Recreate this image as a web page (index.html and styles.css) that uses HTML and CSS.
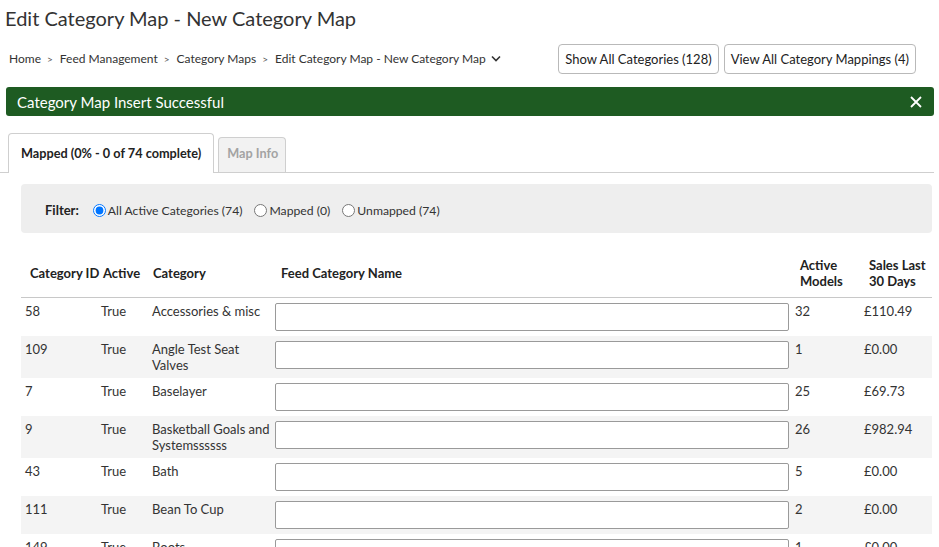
FILE: index.html
```html
<!DOCTYPE html>
<html lang="en">
<head>
<meta charset="utf-8">
<title>Edit Category Map - New Category Map</title>
<link rel="stylesheet" href="styles.css">
</head>
<body>
<h1 class="page-title">Edit Category Map - New Category Map</h1>

<div class="toolbar">
  <nav class="breadcrumb">
    <span>Home</span><span class="sep">&gt;</span>
    <span>Feed Management</span><span class="sep">&gt;</span>
    <span>Category Maps</span><span class="sep">&gt;</span>
    <span>Edit Category Map - New Category Map</span>
    <svg class="chev" width="10" height="7" viewBox="0 0 10 7"><path d="M1 1.5 L5 5.5 L9 1.5" fill="none" stroke="#333" stroke-width="1.6"/></svg>
  </nav>
  <div class="actions">
    <button class="btn">Show All Categories (128)</button>
    <button class="btn">View All Category Mappings (4)</button>
  </div>
</div>

<div class="alert">
  <span>Category Map Insert Successful</span>
  <svg class="close" width="12" height="12" viewBox="0 0 12 12"><path d="M1 1 L11 11 M11 1 L1 11" stroke="#fff" stroke-width="1.8" fill="none"/></svg>
</div>

<div class="tabs">
  <div class="tab active">Mapped (0% - 0 of 74 complete)</div>
  <div class="tab">Map Info</div>
</div>

<div class="tab-body">
  <div class="filter">
    <span class="filter-label">Filter:</span>
    <label class="opt"><input type="radio" name="f" checked> All Active Categories (74)</label>
    <label class="opt"><input type="radio" name="f"> Mapped (0)</label>
    <label class="opt"><input type="radio" name="f"> Unmapped (74)</label>
  </div>

  <table class="grid">
    <colgroup>
      <col class="c1"><col class="c2"><col class="c3"><col class="c4"><col class="c5"><col class="c6">
    </colgroup>
    <thead>
      <tr>
        <th class="h1">Category ID</th>
        <th class="h2">Active</th>
        <th class="h3">Category</th>
        <th class="h4">Feed Category Name</th>
        <th class="h5">Active<br>Models</th>
        <th class="h6">Sales Last<br>30 Days</th>
      </tr>
    </thead>
    <tbody>
      <tr><td>58</td><td class="d2">True</td><td class="d3">Accessories &amp; misc</td><td><input class="feed" type="text"></td><td>32</td><td>£110.49</td></tr>
      <tr><td>109</td><td class="d2">True</td><td class="d3">Angle Test Seat Valves</td><td><input class="feed" type="text"></td><td>1</td><td>£0.00</td></tr>
      <tr><td>7</td><td class="d2">True</td><td class="d3">Baselayer</td><td><input class="feed" type="text"></td><td>25</td><td>£69.73</td></tr>
      <tr><td>9</td><td class="d2">True</td><td class="d3">Basketball Goals and Systemssssss</td><td><input class="feed" type="text"></td><td>26</td><td>£982.94</td></tr>
      <tr><td>43</td><td class="d2">True</td><td class="d3">Bath</td><td><input class="feed" type="text"></td><td>5</td><td>£0.00</td></tr>
      <tr><td>111</td><td class="d2">True</td><td class="d3">Bean To Cup</td><td><input class="feed" type="text"></td><td>2</td><td>£0.00</td></tr>
      <tr><td>149</td><td class="d2">True</td><td class="d3">Boots</td><td><input class="feed" type="text"></td><td>1</td><td>£0.00</td></tr>
    </tbody>
  </table>
</div>
</body>
</html>
```

FILE: styles.css
```css
* { box-sizing: border-box; }

html, body { margin: 0; }

body {
  padding: 0 5px 0 6px;
  font-family: Lato, "Open Sans", Arial, sans-serif;
  font-size: 13px;
  color: #333;
  background: #fff;
  overflow: hidden;
}

.page-title {
  margin: 0;
  padding-top: 6px;
  font-size: 20px;
  line-height: 24px;
  font-weight: 400;
  color: #333;
  margin-left: -1px;
}

.toolbar {
  display: flex;
  align-items: center;
  justify-content: space-between;
  margin-top: 14px;
  padding-right: 18px;
}

.breadcrumb {
  display: flex;
  align-items: center;
  padding-left: 3px;
  font-size: 12px;
  line-height: 14px;
  color: #333;
  margin-top: -1px;
}

.breadcrumb .sep {
  font-size: 10px;
  margin: 0 7px 0 6px;
  color: #555;
}

.breadcrumb .chev { margin-left: 5px; }

.actions { display: flex; gap: 5px; }

.btn {
  font-family: inherit;
  font-size: 13px;
  color: #222;
  background: #fff;
  border: 1px solid #b9b9b9;
  border-radius: 4px;
  height: 30px;
  padding: 0 6px;
  line-height: 28px;
}

.alert {
  display: flex;
  align-items: center;
  justify-content: space-between;
  margin-top: 13px;
  height: 29px;
  padding: 0 12px 0 11px;
  background: #1e5b22;
  color: #fff;
  font-size: 15px;
  border-radius: 3px;
}

.tabs {
  display: flex;
  align-items: flex-end;
  gap: 4px;
  margin: 17px 0 0 -6px;
  padding-left: 8px;
  border-bottom: 1px solid #cfcfcf;
}

.tab {
  border: 1px solid #cfcfcf;
  border-bottom: none;
  border-radius: 4px 4px 0 0;
  font-weight: 700;
  font-size: 12.7px;
  line-height: 16px;
  margin-bottom: -1px;
}

.tab.active {
  background: #fff;
  color: #222;
  padding: 11px 12px 12px 12px;
  position: relative;
}

.tab:not(.active) {
  background: #f2f2f2;
  color: #a3a3a3;
  padding: 7px 7px 11px 8px;
  margin-bottom: 0;
}

.tab-body { padding: 0 2px 0 15px; }

.filter {
  display: flex;
  align-items: center;
  margin-top: 11px;
  height: 49px;
  padding-left: 24px;
  padding-top: 3px;
  background: #eeeeee;
  border-radius: 4px;
  font-size: 12.2px;
  color: #333;
}

.filter-label {
  font-weight: 700;
  font-size: 13px;
  margin-right: 14px;
  color: #222;
}

.opt {
  display: inline-flex;
  align-items: center;
  gap: 2px;
  margin-right: 12px;
}

.opt input {
  margin: 0;
  width: 13px;
  height: 13px;
}

.grid {
  width: 100%;
  margin-top: 16px;
  border-collapse: collapse;
  table-layout: fixed;
}

.c1 { width: 75px; }
.c2 { width: 51px; }
.c3 { width: 124px; }
.c4 { width: 520px; }
.c5 { width: 69px; }
.c6 { width: 72px; }

.grid th {
  text-align: left;
  font-weight: 700;
  color: #222;
  line-height: 16px;
  padding: 8px 0 8px 9px;
  white-space: nowrap;
  vertical-align: middle;
  border-bottom: 1px solid #c8c8c8;
}

.grid th.h1 { padding-left: 9px; }
.grid th.h2 { padding-left: 7px; }
.grid th.h3 { padding-left: 6px; }
.grid th.h4 { padding-left: 10px; }

.grid td {
  line-height: 16px;
  padding: 5px 0 5px 4px;
  vertical-align: top;
  color: #333;
}

.grid td.d2, .grid td.d3 { padding-left: 5px; }

.grid tbody tr:nth-child(even) td { background: #f4f4f4; }

.feed {
  display: block;
  width: 514px;
  height: 28px;
  margin: 0;
  border: 1px solid #9a9a9a;
  border-radius: 2px;
  background: #fff;
}
```
